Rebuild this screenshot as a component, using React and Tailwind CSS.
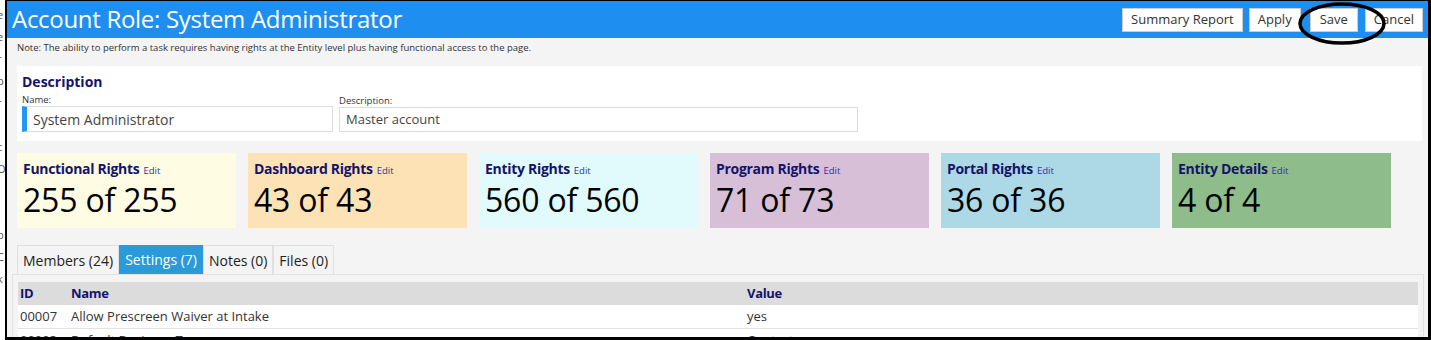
import React from 'react';

const cards = [
  { title: 'Functional Rights', value: '255 of 255', bg: 'bg-[#fefde3]' },
  { title: 'Dashboard Rights', value: '43 of 43', bg: 'bg-[#fde2b6]' },
  { title: 'Entity Rights', value: '560 of 560', bg: 'bg-[#e1fbfc]' },
  { title: 'Program Rights', value: '71 of 73', bg: 'bg-[#d8bfd8]' },
  { title: 'Portal Rights', value: '36 of 36', bg: 'bg-[#add8e6]' },
  { title: 'Entity Details', value: '4 of 4', bg: 'bg-[#8fbc8b]' },
];

const tabs = [
  { label: 'Members (24)', active: false },
  { label: 'Settings (7)', active: true },
  { label: 'Notes (0)', active: false },
  { label: 'Files (0)', active: false },
];

const rows = [
  { id: '00007', name: 'Allow Prescreen Waiver at Intake', value: 'yes' },
  { id: '00003', name: 'Default Business Type', value: 'Contact' },
];

const App = () => {
  return (
    <div className="w-[1431px] h-[340px] overflow-hidden flex bg-white font-['Open_Sans',sans-serif]">
      {/* background page peeking through on the left */}
      <div className="w-[5px] flex-shrink-0 text-[11px] leading-[22px] text-[#555] overflow-hidden pt-[4px]">
        <div className="-ml-[3px]">e</div>
        <div className="-ml-[3px]">e</div>
        <div className="-ml-[3px]">r</div>
        <div className="-ml-[3px]">p</div>
        <div className="-ml-[3px]">r</div>
        <div className="-ml-[3px]">&nbsp;</div>
        <div className="-ml-[3px]">c</div>
        <div className="-ml-[3px]">O</div>
        <div className="-ml-[3px]">l</div>
        <div className="-ml-[3px]">&nbsp;</div>
        <div className="-ml-[3px]">p</div>
        <div className="-ml-[3px]">C</div>
        <div className="-ml-[3px]">k</div>
      </div>

      <div className="flex-1 h-[340px] border-l-2 border-r-[3px] border-t border-b-[3px] border-black bg-[#f4f4f4] overflow-hidden flex flex-col">
        {/* Header */}
        <div className="relative h-[37px] flex-shrink-0 bg-[#1e8ff0] flex items-center justify-between pl-[5px] pr-[5px]">
          <h1 className="text-[24px] text-white tracking-[-0.3px] leading-none pb-[1px]">Account Role: System Administrator</h1>
          <div className="flex items-center pt-[1px]">
            <button className="h-[24px] px-[8px] bg-white border border-[#ccc] text-[13px] text-[#333]">Summary Report</button>
            <button className="h-[24px] px-[8px] ml-[6px] bg-white border border-[#ccc] text-[13px] text-[#333]">Apply</button>
            <button className="h-[24px] px-[9px] ml-[9px] bg-white border border-[#ccc] text-[13px] text-[#333]">Save</button>
            <button className="h-[24px] px-[8px] ml-[7px] bg-white border border-[#ccc] text-[13px] text-[#333]">Cancel</button>
          </div>
          <svg className="absolute left-[1290px] top-[1px]" width="90" height="44" viewBox="0 0 90 44">
            <ellipse cx="45" cy="21.5" rx="42" ry="19.5" fill="none" stroke="#000" strokeWidth="3.5" />
          </svg>
        </div>

        {/* Note */}
        <p className="flex-shrink-0 text-[9.5px] text-[#333] pl-[10px] pt-[3px] leading-[14px]">
          Note: The ability to perform a task requires having rights at the Entity level plus having functional access to the page.
        </p>

        {/* Description */}
        <div className="flex-shrink-0 mt-[11px] ml-[10px] mr-[6px] h-[75px] bg-white pl-[5px] pt-[8px]">
          <h2 className="text-[14px] font-bold text-[#14146b] leading-[16px]">Description</h2>
          <div className="flex gap-[6px] mt-[4px]">
            <div>
              <div className="text-[9.5px] text-[#333] leading-[12px]">Name:</div>
              <div className="w-[311px] h-[26px] border border-[#ddd] border-l-[5px] border-l-[#2196f3] flex items-center pl-[6px] text-[14px] text-[#444]">
                System Administrator
              </div>
            </div>
            <div className="pt-[1px]">
              <div className="text-[9.5px] text-[#333] leading-[12px]">Description:</div>
              <div className="w-[519px] h-[25px] border border-[#ddd] flex items-center pl-[6px] text-[13px] text-[#444]">
                Master account
              </div>
            </div>
          </div>
        </div>

        {/* Rights cards */}
        <div className="flex-shrink-0 flex gap-[12px] mt-[12px] ml-[10px]">
          {cards.map((card) => (
            <div key={card.title} className={`w-[219px] h-[75px] ${card.bg} pl-[6px] pt-[5px]`}>
              <div className="flex items-baseline gap-[4px]">
                <span className="text-[14px] font-bold text-[#14146b] tracking-[-0.3px]">{card.title}</span>
                <span className="text-[9.5px] text-[#3030a0]">Edit</span>
              </div>
              <div className="text-[32px] text-black leading-[36px] tracking-[-0.2px] mt-[3px]">{card.value}</div>
            </div>
          ))}
        </div>

        {/* Tabs */}
        <div className="flex-shrink-0 flex mt-[17px] ml-[5px] pl-[5px]">
          {tabs.map((tab) => (
            <div
              key={tab.label}
              className={
                tab.active
                  ? 'h-[29px] px-[6px] flex items-center text-[14px] bg-[#2b9ad8] text-white'
                  : 'h-[29px] px-[5px] flex items-center text-[14px] text-[#222] border border-b-0 border-[#e0e0e0] bg-[#f4f4f4]'
              }
            >
              {tab.label}
            </div>
          ))}
        </div>

        {/* Settings table */}
        <div className="flex-shrink-0 ml-[5px] mr-[4px] border border-[#e2e2e2] pt-[7px] px-[5px] pb-[10px]">
          <div className="flex h-[23px] items-center bg-[#dcdcdc] text-[13px] font-bold text-[#14146b] tracking-[-0.3px]">
            <div className="w-[53px] pl-[2px]">ID</div>
            <div className="w-[676px]">Name</div>
            <div>Value</div>
          </div>
          {rows.map((row) => (
            <div key={row.id} className="flex h-[24px] items-center bg-white border-b border-[#e2e2e2] text-[13px] text-[#333]">
              <div className="w-[53px] pl-[2px]">{row.id}</div>
              <div className="w-[676px]">{row.name}</div>
              <div>{row.value}</div>
            </div>
          ))}
        </div>
      </div>
    </div>
  );
};

export default App;
